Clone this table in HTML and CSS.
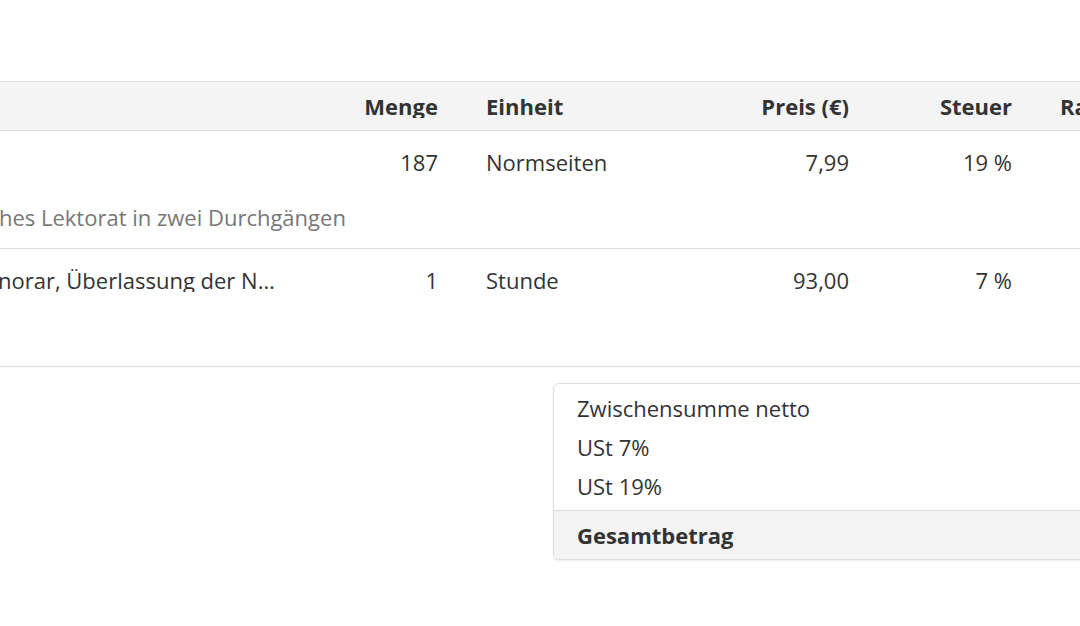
FILE: index.html
```html
<!DOCTYPE html>
<html lang="de">
<head>
<meta charset="utf-8">
<title>Rechnung – Positionen</title>
<link rel="stylesheet" href="styles.css">
</head>
<body>
<div class="page">
  <div class="items">
    <div class="row head">
      <div class="cell desc">Leistung</div>
      <div class="cell num">Menge</div>
      <div class="cell">Einheit</div>
      <div class="cell num">Preis (€)</div>
      <div class="cell num">Steuer</div>
      <div class="cell">Rabatt</div>
      <div class="cell num">Betrag (€)</div>
    </div>
    <div class="row item">
      <div class="cell desc">Lektorat</div>
      <div class="cell num">187</div>
      <div class="cell">Normseiten</div>
      <div class="cell num">7,99</div>
      <div class="cell num">19 %</div>
      <div class="cell"></div>
      <div class="cell num">1.494,13</div>
      <div class="sub">Umfangreiches Lektorat in zwei Durchgängen</div>
    </div>
    <div class="row item">
      <div class="cell desc">Pauschalhonorar, Überlassung der Nutzungsrechte</div>
      <div class="cell num">1</div>
      <div class="cell">Stunde</div>
      <div class="cell num">93,00</div>
      <div class="cell num">7 %</div>
      <div class="cell"></div>
      <div class="cell num">93,00</div>
      <div class="sub"></div>
    </div>
  </div>
  <div class="totals-wrap">
    <div class="totals">
      <div class="lines">
        <div class="line">Zwischensumme netto</div>
        <div class="line">USt 7%</div>
        <div class="line">USt 19%</div>
      </div>
      <div class="grand">Gesamtbetrag</div>
    </div>
  </div>
</div>
</body>
</html>
```
FILE: styles.css
```css
html, body {
  margin: 0;
  padding: 0;
  background: #ffffff;
  overflow: hidden;
}
body {
  font-family: "Open Sans", "Liberation Sans", sans-serif;
  font-size: 22px;
  color: #333333;
  width: 1080px;
  height: 626px;
}
.page {
  margin-left: -144px;
  width: 1410px;
  padding-top: 81px;
}
.row {
  display: grid;
  grid-template-columns: 448px 158px 198px 213px 163px 150px 200px;
  border-bottom: 1px solid #dddddd;
}
.cell {
  padding: 0 24px;
  line-height: 24px;
  white-space: nowrap;
  overflow: hidden;
  text-overflow: ellipsis;
}
.num { text-align: right; }
.head {
  background: #f4f4f4;
  border-top: 1px solid #dddddd;
  height: 48px;
  align-items: center;
  font-weight: 700;
}
.item {
  padding: 19px 0 19px;
  row-gap: 31px;
}
.sub {
  grid-column: 1 / 4;
  padding: 0 24px;
  line-height: 24px;
  height: 24px;
  color: #777777;
  white-space: nowrap;
}
.totals-wrap {
  padding: 16px 0 0 697px;
}
.totals {
  border: 1px solid #dddddd;
  border-radius: 6px;
  box-shadow: 0 1px 2px rgba(0, 0, 0, 0.08);
  overflow: hidden;
  width: 700px;
}
.lines {
  padding: 5px 23px 4px;
}
.line {
  line-height: 39px;
}
.grand {
  background: #f4f4f4;
  border-top: 1px solid #dddddd;
  height: 48px;
  line-height: 48px;
  padding: 0 23px;
  font-weight: 700;
}
```
